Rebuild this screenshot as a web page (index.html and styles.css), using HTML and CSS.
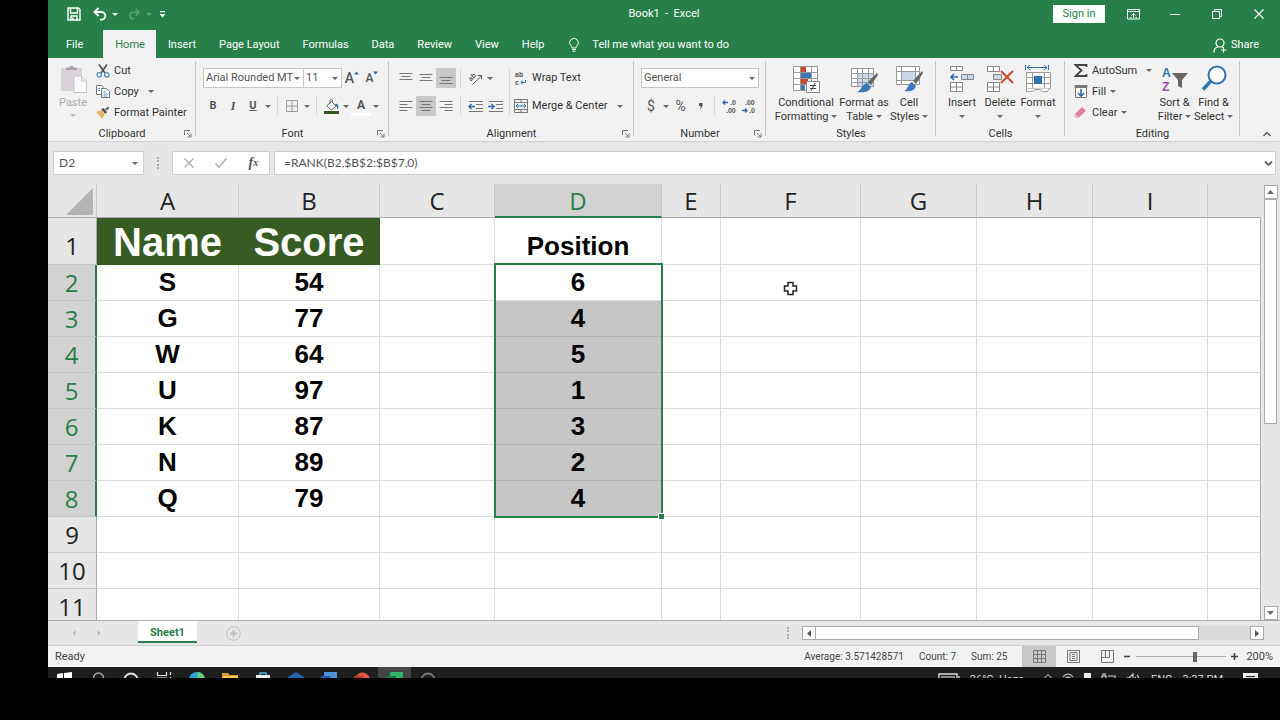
FILE: index.html
```html
<!DOCTYPE html>
<html lang="en">
<head>
<meta charset="utf-8">
<title>Book1 - Excel</title>
<link rel="stylesheet" href="styles.css">
</head>
<body>
<div class="app">
  <header class="titlebar">
    <div class="quick">
      <button class="icon-btn" aria-label="Save"><svg width="14" height="14" viewBox="0 0 14 14" fill="none" stroke="#fff" stroke-width="1.4"><path d="M1 1h10.500l1.500 1.500V13H1zM3.500 1v5h7V1M4 13V9h6v4M6 10.500v2"/></svg></button>
      <button class="icon-btn undo" aria-label="Undo"><svg width="15" height="14" viewBox="0 0 15 14" fill="none" stroke="#fff" stroke-width="1.900"><path d="M5.500 1L1.500 5l4 4M2 5h6.500a3.800 3.800 0 0 1 0 7.600H7"/></svg></button><i class="caret light"></i>
      <button class="icon-btn redo" aria-label="Redo"><svg width="14" height="12" viewBox="0 0 15 14" fill="none" stroke="#fff" stroke-width="1.800"><path d="M9.500 1l4 4-4 4M13 5H6.500a3.800 3.800 0 0 0 0 7.600H8"/></svg></button><i class="caret light faint"></i>
      <button class="icon-btn customize" aria-label="Customize Quick Access Toolbar"><svg width="7" height="7" viewBox="0 0 7 7"><path d="M1 0h5v1.200H1zM0.500 3h6l-3 3.500z" fill="#fff"/></svg></button>
    </div>
    <h1 class="doc-title">Book1&nbsp; -&nbsp; Excel</h1>
    <div class="window-actions">
      <button class="signin">Sign in</button>
      <button class="win-btn" aria-label="Ribbon Display Options"><svg width="13" height="11" viewBox="0 0 13 11" fill="none" stroke="#fff"><path d="M.5.5h12v9.500H.5zM.5 2.500h12M6.500 9V4.500M4.500 6.500l2-2 2 2M3 8.500h1.500M8.500 8.500H10"/></svg></button>
      <button class="win-btn" aria-label="Minimize"><svg width="10" height="10" viewBox="0 0 10 10" stroke="#fff"><path d="M0 5.500h10"/></svg></button>
      <button class="win-btn" aria-label="Restore"><svg width="10" height="10" viewBox="0 0 10 10" fill="none" stroke="#fff"><path d="M.5 2.500h7v7h-7zM2.500 2.500v-2h7v7h-2"/></svg></button>
      <button class="win-btn" aria-label="Close"><svg width="10" height="10" viewBox="0 0 10 10" stroke="#fff" stroke-width="1.100"><path d="M.5.5l9 9M9.500.5l-9 9"/></svg></button>
    </div>
  </header>

  <nav class="tabs">
    <button class="tab file">File</button>
    <button class="tab active">Home</button>
    <button class="tab">Insert</button>
    <button class="tab">Page Layout</button>
    <button class="tab">Formulas</button>
    <button class="tab">Data</button>
    <button class="tab">Review</button>
    <button class="tab">View</button>
    <button class="tab">Help</button>
    <button class="tab tell"><svg width="10" height="14" viewBox="0 0 10 14" fill="none" stroke="#fff"><path d="M3 10V8.500C1.500 7.500.7 6.300.7 4.800a4.300 4.300 0 0 1 8.600 0C9.300 6.300 8.500 7.500 7 8.500V10zM3 11.500h4M3.500 13.200h3"/></svg>Tell me what you want to do</button>
    <button class="tab share"><svg width="15" height="15" viewBox="0 0 15 15" fill="none" stroke="#fff" stroke-width="1.200"><circle cx="7" cy="5" r="4"/><path d="M1 14.500c0-3.500 2-5.500 4.500-5.500M9 8.800l1.500 1M10.500 9.500v5M8 12h5.500"/></svg>Share</button>
  </nav>

  <section class="ribbon">
    <div class="group g-clipboard">
      <div class="body clipboard">
        <button class="big paste" disabled>
          <svg width="27" height="28" viewBox="0 0 27 28"><path d="M1 3h21v23H1z" fill="#dad3da"/><path d="M6 5V2.500h3C9 .5 14 .5 14 2.500h3V5z" fill="#aaa5aa"/><path d="M14 11h7.500l5 5v11.500H14z" fill="#fafafa" stroke="#c5c3c5"/><path d="M21.500 11v5h5" fill="none" stroke="#c5c3c5"/></svg>
          <span>Paste</span><i class="caret faint-dark"></i>
        </button>
        <div class="stack">
          <button class="row"><svg width="14" height="14" viewBox="0 0 14 14" fill="none"><path d="M3 0.500l6 8.500M11 0.500L5 9" stroke="#555" stroke-width="1.700"/><circle cx="3.200" cy="10.800" r="2.200" stroke="#5b8fc4" stroke-width="1.300"/><circle cx="10.800" cy="10.800" r="2.200" stroke="#5b8fc4" stroke-width="1.300"/></svg>Cut</button>
          <button class="row"><svg width="14" height="13" viewBox="0 0 14 13" fill="#fff" stroke="#6f7882"><path d="M.5.5h5l2 2v7h-7z"/><path d="M5.500 3.500h5l3 3v6h-8z"/><path d="M2 3.500h2M2 5.500h2M7.500 7h2M7.500 9h4M7.500 11h4" stroke="#5b8fc4"/></svg>Copy<i class="caret far"></i></button>
          <button class="row"><svg width="14" height="13" viewBox="0 0 14 13"><path d="M0 6l5-2 4 4.500L6 13C4 10 2 8 0 6z" fill="#e8b36a"/><path d="M5 3.500L7.500 2 11 6 9.500 8z" fill="#555"/><path d="M9 3l3-2.500L13.500 2 11 4.500z" fill="#666"/></svg>Format Painter</button>
        </div>
      </div>
      <footer class="label">Clipboard<svg class="launcher" width="8" height="8" viewBox="0 0 8 8" fill="none" stroke="#777"><path d="M.5 5V.5H6M3 3l3.500 3.500M7 3.500V7H3.500"/></svg></footer>
    </div>

    <div class="group g-font">
      <div class="body font">
        <div class="line">
          <span class="select w-font"><select aria-label="Font"><option>Arial Rounded MT Bold</option></select><i class="caret"></i></span>
          <span class="select w-size"><select aria-label="Font size"><option>11</option></select><i class="caret"></i></span>
          <button class="tool grow" aria-label="Increase Font Size">A<svg width="5" height="4" viewBox="0 0 5 4"><path d="M0 3.500L2.500.5 5 3.500z" fill="#2f6cab"/></svg></button>
          <button class="tool grow small" aria-label="Decrease Font Size">A<svg width="5" height="4" viewBox="0 0 5 4"><path d="M0 .5h5L2.500 3.500z" fill="#2f6cab"/></svg></button>
        </div>
        <div class="line">
          <button class="tool bold">B</button><button class="tool italic">I</button><button class="tool underline">U</button><i class="caret slot"></i>
          <i class="sep"></i>
          <button class="tool" aria-label="Borders"><svg width="12" height="12" viewBox="0 0 12 12" fill="none" stroke="#999"><path d="M.5.5h11v11H.5zM6 .5v11M.5 6h11"/></svg></button><i class="caret slot"></i>
          <i class="sep"></i>
          <button class="tool" aria-label="Fill Color"><svg width="15" height="15" viewBox="0 0 15 15"><path d="M2.500 7l5-4.500L12 7l-4.500 4z" fill="#fff" stroke="#666"/><path d="M6 5V1.500c0-1.500 2.500-1.500 2.500 0V4" fill="none" stroke="#666"/><path d="M12 4.500c3 1 3 4 1.500 6C13 9 13 7 11 6z" fill="#3a73b0"/><path d="M0 12h15v3H0z" fill="#375623"/></svg></button><i class="caret slot"></i>
          <button class="tool fontcolor" aria-label="Font Color">A</button><i class="caret slot"></i>
        </div>
      </div>
      <footer class="label">Font<svg class="launcher" width="8" height="8" viewBox="0 0 8 8" fill="none" stroke="#777"><path d="M.5 5V.5H6M3 3l3.500 3.500M7 3.500V7H3.500"/></svg></footer>
    </div>

    <div class="group g-align">
      <div class="body align">
        <div class="lines">
          <div class="line">
            <button class="tool" aria-label="Top Align"><svg width="14" height="14" viewBox="0 0 14 14" stroke="#777"><path d="M.5 2.500h13M2.500 5.500h9M.5 8.500h13"/></svg></button>
            <button class="tool" aria-label="Middle Align"><svg width="14" height="14" viewBox="0 0 14 14" stroke="#777"><path d="M.5 3.500h13M2.500 6.500h9M.5 9.500h13"/></svg></button>
            <button class="tool on" aria-label="Bottom Align"><svg width="14" height="14" viewBox="0 0 14 14" stroke="#777"><path d="M.5 6.500h13M2.500 9.500h9M.5 12.500h13"/></svg></button>
            <i class="sep"></i>
            <button class="tool" aria-label="Orientation"><svg width="16" height="16" viewBox="0 0 16 16" fill="none" stroke="#555"><text x="2" y="9" transform="rotate(-42 6 8)" class="tiny slant" stroke="none">ab</text><path d="M5.500 14.500L14.500 6M11 5.500h3.500V9"/></svg></button><i class="caret slot"></i>
          </div>
          <div class="line">
            <button class="tool" aria-label="Align Left"><svg width="14" height="12" viewBox="0 0 14 12" stroke="#777"><path d="M.5 1.500h13M.5 4.500h8M.5 7.500h13M.5 10.500h8"/></svg></button>
            <button class="tool on" aria-label="Center"><svg width="14" height="12" viewBox="0 0 14 12" stroke="#777"><path d="M.5 1.500h13M2.500 4.500h9M.5 7.500h13M2.500 10.500h9"/></svg></button>
            <button class="tool" aria-label="Align Right"><svg width="14" height="12" viewBox="0 0 14 12" stroke="#777"><path d="M.5 1.500h13M5.500 4.500h8M.5 7.500h13M5.500 10.500h8"/></svg></button>
            <i class="sep"></i>
            <button class="tool" aria-label="Decrease Indent"><svg width="15" height="13" viewBox="0 0 15 13" fill="none" stroke="#777"><path d="M1 1.500h14M8 4.500h7M8 8.500h7M1 11.500h14"/><path d="M7 6.500H1M3.500 4L1 6.500 3.500 9" stroke="#2f6cab" stroke-width="1.500"/></svg></button>
            <button class="tool" aria-label="Increase Indent"><svg width="15" height="13" viewBox="0 0 15 13" fill="none" stroke="#777"><path d="M1 1.500h14M8 4.500h7M8 8.500h7M1 11.500h14"/><path d="M0 6.500h6M3.500 4L6 6.500 3.500 9" stroke="#2f6cab" stroke-width="1.500"/></svg></button>
          </div>
        </div>
        <i class="sep tall"></i>
        <div class="lines">
          <button class="row wide"><svg width="14" height="16" viewBox="0 0 14 16"><text x="1" y="7" class="tiny">ab</text><text x="1" y="15" class="tiny">c</text><path d="M11.500 10v2.500H7M9 10.500l-2 2 2 2" fill="none" stroke="#2f6cab"/></svg>Wrap Text</button>
          <button class="row wide"><svg width="14" height="14" viewBox="0 0 14 14" fill="none" stroke="#777"><path d="M.5.5h13v13H.5zM.5 3.500h13M.5 10.500h13M7 .5v3M7 10.500v3"/><path d="M2 7h10M4 5L2 7l2 2M10 5l2 2-2 2" stroke="#2f6cab"/></svg>Merge &amp; Center<i class="caret far"></i></button>
        </div>
      </div>
      <footer class="label">Alignment<svg class="launcher" width="8" height="8" viewBox="0 0 8 8" fill="none" stroke="#777"><path d="M.5 5V.5H6M3 3l3.500 3.500M7 3.500V7H3.500"/></svg></footer>
    </div>

    <div class="group g-number">
      <div class="body number">
        <div class="line"><span class="select w-number"><select aria-label="Number format"><option>General</option></select><i class="caret"></i></span></div>
        <div class="line">
          <button class="tool sign">$</button><i class="caret slot"></i><button class="tool sign">%</button><button class="tool bold" aria-label="Comma Style"><svg width="5" height="8" viewBox="0 0 5 8"><path d="M1 1h3.500c.5 3-.5 5-3 6 1-1 1.200-2 1.200-3H1z" fill="#555"/></svg></button>
          <i class="sep"></i>
          <button class="tool" aria-label="Increase Decimal"><svg width="15" height="16" viewBox="0 0 15 16"><text x="8" y="7" class="digits">.0</text><text x="4" y="15" class="digits">.00</text><path d="M6 4.500H1M3 2.500l-2 2 2 2" fill="none" stroke="#2f6cab" stroke-width="1.300"/></svg></button>
          <button class="tool" aria-label="Decrease Decimal"><svg width="15" height="16" viewBox="0 0 15 16"><text x="3" y="7" class="digits">.00</text><text x="7" y="15" class="digits">.0</text><path d="M0 12.500h5M3 10.500l2 2-2 2" fill="none" stroke="#2f6cab" stroke-width="1.300"/></svg></button>
        </div>
      </div>
      <footer class="label">Number<svg class="launcher" width="8" height="8" viewBox="0 0 8 8" fill="none" stroke="#777"><path d="M.5 5V.5H6M3 3l3.500 3.500M7 3.500V7H3.500"/></svg></footer>
    </div>

    <div class="group g-styles">
      <div class="body bigs">
        <button class="big w-cond"><svg width="28" height="28" viewBox="0 0 28 28"><path d="M1.500 1.500h24v24h-24z" fill="#fff" stroke="#999"/><path d="M1.500 7.500h24M1.500 13.500h24M1.500 19.500h24M8.500 1.500v24M19.500 1.500v24" stroke="#999"/><path d="M9 2h5v5H9zM9 14h7v5H9z" fill="#d24726"/><path d="M9 8h10v5H9zM9 20h4v5H9z" fill="#3a78b5"/><path d="M14.500 16.500h13v11h-13z" fill="#fff" stroke="#888"/><path d="M18 20.500h6M18 23.500h6M23 18l-4 8" stroke="#444"/></svg><span>Conditional<br>Formatting <i class="caret"></i></span></button>
        <button class="big w-table"><svg width="28" height="28" viewBox="0 0 28 28"><path d="M1.500 3.500h22v18h-22z" fill="#fff" stroke="#999"/><path d="M7 8h16v13H7z" fill="#c9d9ea"/><path d="M1.500 8.500h22M1.500 13.500h22M1.500 17.500h22M7.500 3.500v18M12.500 3.500v18M18.500 3.500v18" stroke="#999"/><path d="M27 8l1 2-7 10-3-3z" fill="#666"/><path d="M17 18l4 4c-2 5-7 6-14 5 4-1 5-8 10-9z" fill="#3a78b5"/></svg><span>Format as<br>Table <i class="caret"></i></span></button>
        <button class="big w-cell"><svg width="28" height="28" viewBox="0 0 28 28"><path d="M1.500 1.500h23v18h-23z" fill="#fff" stroke="#999"/><path d="M1.500 6.500h23M1.500 15.500h23M6.500 1.500v18M20.500 1.500v18" stroke="#999"/><path d="M7 7h13v8H7z" fill="#c9d9ea"/><path d="M27 6l1 2-7 11-3-3z" fill="#666"/><path d="M17 17l4 4c-2 5-6 6-12 5 4-1 4-8 8-9z" fill="#3a78b5"/></svg><span>Cell<br>Styles <i class="caret"></i></span></button>
      </div>
      <footer class="label">Styles</footer>
    </div>

    <div class="group g-cells">
      <div class="body bigs">
        <button class="big w-small"><svg width="26" height="28" viewBox="0 0 26 28" fill="#fff" stroke="#888"><path d="M1.500 1.500h12v4h-12zM7.500 1.500v4"/><path d="M12.500 9.500h12v5h-12z" fill="#c9d9ea"/><path d="M18.500 9.500v5"/><path d="M1.500 17.500h12v9h-12zM7.500 17.500v9M1.500 22h12"/><path d="M9 12H2M5 9l-3 3 3 3" fill="none" stroke="#2f6cab" stroke-width="1.600"/></svg><span>Insert<br><i class="caret"></i></span></button>
        <button class="big w-small"><svg width="28" height="28" viewBox="0 0 28 28" fill="#fff" stroke="#888"><path d="M1.500 1.500h12v5h-12zM7.500 1.500v5"/><path d="M7.500 9.500h8v5h-8z" fill="#c9d9ea"/><path d="M1.500 17.500h12v9h-12zM7.500 17.500v9M1.500 22h12"/><path d="M15 6l12 12M27 6L15 18" stroke="#d24726" stroke-width="2"/></svg><span>Delete<br><i class="caret"></i></span></button>
        <button class="big w-small"><svg width="28" height="28" viewBox="0 0 28 28" fill="#fff" stroke="#999"><path d="M2.500 7.500h24v16h-24zM2.500 12.500h24M2.500 18.500h24M8.500 7.500v16M20.500 7.500v16"/><path d="M10 11h8v8h-8z" fill="#2f74b5" stroke="none"/><path d="M2.500 23.500v3h6l3-2h4l3 2h5l2-3"/><path d="M3 2.500h20M6 0L3 2.500 6 5M20 0l3 2.500L20 5M1.500 0v5M24.500 0v5" fill="none" stroke="#2f6cab"/></svg><span>Format<br><i class="caret"></i></span></button>
      </div>
      <footer class="label">Cells</footer>
    </div>

    <div class="group g-editing">
      <div class="body editing">
        <div class="stack">
          <button class="row"><svg width="14" height="13" viewBox="0 0 14 13" fill="none" stroke="#444" stroke-width="1.800"><path d="M12.500 3V1H1.500l6 5.500-6 5.500h11v-2"/></svg>AutoSum<i class="caret far"></i></button>
          <button class="row"><svg width="14" height="13" viewBox="0 0 14 13" fill="#fff" stroke="#777"><path d="M1.500.5h11v12h-11z"/><path d="M1 .5h12v2H1z" fill="#777"/><path d="M7 4v7M4 8l3 3 3-3" fill="none" stroke="#2f6cab" stroke-width="1.600"/></svg>Fill<i class="caret"></i></button>
          <button class="row"><svg width="14" height="13" viewBox="0 0 14 13"><path d="M1 8l7-7 4 3.500-7 7z" fill="#e0819d"/><path d="M1 8l4 3.500-2 1L0 10z" fill="#f0b6c6"/></svg>Clear<i class="caret"></i></button>
        </div>
        <button class="big w-sort"><svg width="28" height="28" viewBox="0 0 28 28"><text x="1" y="12" class="az a">A</text><text x="1" y="26" class="az z">Z</text><path d="M11 8h16l-6 7v8l-4-2v-6z" fill="#666"/></svg><span>Sort &amp;<br>Filter <i class="caret"></i></span></button>
        <button class="big w-sort"><svg width="28" height="28" viewBox="0 0 28 28" fill="none" stroke="#2f74b5"><circle cx="17" cy="10" r="8.500" fill="#fff" stroke-width="2"/><path d="M11 16L3 24.500" stroke-width="3.500"/></svg><span>Find &amp;<br>Select <i class="caret"></i></span></button>
      </div>
      <footer class="label">Editing</footer>
    </div>
    <button class="collapse" aria-label="Collapse the Ribbon"><svg width="8" height="6" viewBox="0 0 8 6" fill="none" stroke="#555" stroke-width="1.400"><path d="M.5 5L4 1.500 7.500 5"/></svg></button>
  </section>

  <section class="formula-bar">
    <div class="name-box"><input type="text" aria-label="Name Box" value="D2"><i class="caret"></i></div>
    <i class="dots"></i>
    <div class="formula-tools">
      <button class="icon-btn" aria-label="Cancel"><svg width="10" height="10" viewBox="0 0 10 10" stroke="#b5b5b5" stroke-width="1.500"><path d="M.5.5l9 9M9.500.5l-9 9"/></svg></button>
      <button class="icon-btn" aria-label="Enter"><svg width="12" height="10" viewBox="0 0 12 10" fill="none" stroke="#b5b5b5" stroke-width="1.700"><path d="M.5 5.500L4 9l7.500-8.500"/></svg></button>
      <button class="icon-btn fx" aria-label="Insert Function">f<sub>x</sub></button>
    </div>
    <div class="formula"><input type="text" aria-label="Formula" value="=RANK(B2,$B$2:$B$7,0)"><svg width="9" height="7" viewBox="0 0 9 7" fill="none" stroke="#666" stroke-width="1.800"><path d="M1 1.500l3.500 3.500L8 1.500"/></svg></div>
  </section>

  <main class="sheet">
    <div class="grid-wrap">
      <table class="grid">
        <colgroup><col class="c-row"><col class="c-a"><col class="c-b"><col class="c-c"><col class="c-d"><col class="c-e"><col class="c-f"><col class="c-g"><col class="c-g"><col class="c-c"><col></colgroup>
        <thead><tr><th class="corner"><svg width="28" height="27" viewBox="0 0 28 27"><path d="M27 0v27H0z" fill="#b4b4b4"/></svg></th><th>A</th><th>B</th><th>C</th><th class="picked">D</th><th>E</th><th>F</th><th>G</th><th>H</th><th>I</th><th></th></tr></thead>
        <tbody>
          <tr class="first"><th>1</th><td class="head">Name</td><td class="head">Score</td><td></td><td>Position</td><td></td><td></td><td></td><td></td><td></td><td></td></tr>
          <tr class="picked"><th>2</th><td>S</td><td>54</td><td></td><td class="anchor">6<div class="selection"></div></td><td></td><td class="anchor"><svg class="pointer" width="15" height="15" viewBox="0 0 15 15"><path d="M5 1.500h5V5h3.500v5H10v3.500H5V10H1.500V5H5z" fill="#fff" stroke="#222" stroke-width="1.500"/></svg></td><td></td><td></td><td></td><td></td></tr>
          <tr class="picked"><th>3</th><td>G</td><td>77</td><td></td><td class="sel">4</td><td></td><td></td><td></td><td></td><td></td><td></td></tr>
          <tr class="picked"><th>4</th><td>W</td><td>64</td><td></td><td class="sel">5</td><td></td><td></td><td></td><td></td><td></td><td></td></tr>
          <tr class="picked"><th>5</th><td>U</td><td>97</td><td></td><td class="sel">1</td><td></td><td></td><td></td><td></td><td></td><td></td></tr>
          <tr class="picked"><th>6</th><td>K</td><td>87</td><td></td><td class="sel">3</td><td></td><td></td><td></td><td></td><td></td><td></td></tr>
          <tr class="picked"><th>7</th><td>N</td><td>89</td><td></td><td class="sel">2</td><td></td><td></td><td></td><td></td><td></td><td></td></tr>
          <tr class="picked"><th>8</th><td>Q</td><td>79</td><td></td><td class="sel">4</td><td></td><td></td><td></td><td></td><td></td><td></td></tr>
          <tr><th>9</th><td></td><td></td><td></td><td></td><td></td><td></td><td></td><td></td><td></td><td></td></tr>
          <tr><th>10</th><td></td><td></td><td></td><td></td><td></td><td></td><td></td><td></td><td></td><td></td></tr>
          <tr><th>11</th><td></td><td></td><td></td><td></td><td></td><td></td><td></td><td></td><td></td><td></td></tr>
        </tbody>
      </table>
    </div>
    <div class="vscroll">
      <button class="arrow" aria-label="Scroll up"><svg width="7" height="4" viewBox="0 0 7 4"><path d="M0 4L3.500 0 7 4z" fill="#666"/></svg></button>
      <div class="thumb"></div>
      <button class="arrow" aria-label="Scroll down"><svg width="7" height="4" viewBox="0 0 7 4"><path d="M0 0h7L3.500 4z" fill="#666"/></svg></button>
    </div>
  </main>

  <section class="sheetbar">
    <div class="sheet-nav">
      <button class="icon-btn" aria-label="Previous sheet"><svg width="4" height="6" viewBox="0 0 4 6"><path d="M3.500 0v6L.5 3z" fill="#bbb"/></svg></button>
      <button class="icon-btn" aria-label="Next sheet"><svg width="4" height="6" viewBox="0 0 4 6"><path d="M.5 0v6l3-3z" fill="#bbb"/></svg></button>
    </div>
    <button class="sheet-tab">Sheet1</button>
    <button class="icon-btn add" aria-label="New sheet"><svg width="15" height="15" viewBox="0 0 15 15" fill="none" stroke="#bdbdbd"><circle cx="7.500" cy="7.500" r="6.800"/><path d="M7.500 4v7M4 7.500h7" stroke-width="1.800"/></svg></button>
    <i class="dots"></i>
    <div class="hscroll">
      <button class="arrow" aria-label="Scroll left"><svg width="4" height="7" viewBox="0 0 4 7"><path d="M4 0v7L0 3.500z" fill="#555"/></svg></button>
      <div class="thumb"></div>
      <button class="arrow" aria-label="Scroll right"><svg width="4" height="7" viewBox="0 0 4 7"><path d="M0 0v7l4-3.500z" fill="#555"/></svg></button>
    </div>
  </section>

  <footer class="status">
    <span class="ready">Ready</span>
    <span>Average: 3.571428571</span><span>Count: 7</span><span>Sum: 25</span>
    <div class="views">
      <button class="view on" aria-label="Normal"><svg width="13" height="13" viewBox="0 0 13 13" fill="none" stroke="#777"><path d="M.5.5h12v12H.5zM.5 4.500h12M.5 8.500h12M4.500.5v12M8.500.5v12"/></svg></button>
      <button class="view" aria-label="Page Layout"><svg width="13" height="13" viewBox="0 0 13 13" fill="none" stroke="#777"><path d="M.5.5h12v12H.5zM3 2.500h7v8H3zM5 4.500h3M5 6.500h3M5 8.500h3"/></svg></button>
      <button class="view" aria-label="Page Break Preview"><svg width="13" height="13" viewBox="0 0 13 13" fill="none" stroke="#777"><path d="M.5.5h12v12H.5zM.5 7.500h8v-7M4.500.5v7"/></svg></button>
    </div>
    <div class="zoom">
      <button class="icon-btn" aria-label="Zoom out"><svg width="7" height="7" viewBox="0 0 7 7" stroke="#444" stroke-width="1.600"><path d="M0 3.500h6"/></svg></button>
      <input type="range" aria-label="Zoom" min="0" max="100" value="66">
      <button class="icon-btn" aria-label="Zoom in"><svg width="7" height="7" viewBox="0 0 7 7" stroke="#444" stroke-width="1.600"><path d="M0 3.500h7M3.500 0v7"/></svg></button>
      <span class="percent">200%</span>
    </div>
  </footer>

  <div class="taskbar">
    <div class="task-apps">
      <button class="task" aria-label="Start"><svg width="16" height="16" viewBox="0 0 16 16" fill="#fff"><path d="M0 2l6-1v7H0zM7 1l8-1v8H7zM0 9h6v6l-6-1zM7 9h8v7l-8-1z"/></svg></button>
      <button class="task" aria-label="Search"><svg width="16" height="16" viewBox="0 0 16 16" fill="none" stroke="#aaa" stroke-width="1.400"><circle cx="8.500" cy="6" r="5"/><path d="M5 10l-4 5"/></svg></button>
      <button class="task" aria-label="Cortana"><svg width="16" height="16" viewBox="0 0 16 16" fill="none" stroke="#ddd" stroke-width="2"><circle cx="8" cy="8" r="6.500"/></svg></button>
      <button class="task" aria-label="Task View"><svg width="16" height="16" viewBox="0 0 16 16" fill="none" stroke="#ddd" stroke-width="1.200"><path d="M1.500 0v3.500h9V0M1.500 6h9v5h-9zM14.500 0v3M14.500 5v10"/></svg></button>
      <button class="task" aria-label="Edge"><svg width="16" height="16" viewBox="0 0 16 16"><circle cx="8" cy="8" r="8" fill="#2da4d8"/><path d="M9 0a8 8 0 0 1 7 8H8z" fill="#5bd67a"/></svg></button>
      <button class="task" aria-label="File Explorer"><svg width="16" height="16" viewBox="0 0 16 16"><path d="M0 1h6l2 2h8v11H0z" fill="#d99c22"/><path d="M1 4h15v10H1z" fill="#f3cd62"/></svg></button>
      <button class="task" aria-label="Store"><svg width="16" height="16" viewBox="0 0 16 16"><path d="M5 3V1h6v2" fill="none" stroke="#4fb2d4" stroke-width="1.500"/><path d="M1 3h14v12H1z" fill="#eee"/></svg></button>
      <button class="task" aria-label="Mail"><svg width="16" height="16" viewBox="0 0 16 16"><path d="M0 5l8-5 8 5v10H0z" fill="#1f62ae"/></svg></button>
      <button class="task" aria-label="Word"><svg width="16" height="16" viewBox="0 0 16 16"><path d="M3 0h13v16H3z" fill="#4990dd"/><path d="M0 4h9v9H0z" fill="#245ab0"/></svg></button>
      <button class="task" aria-label="PowerPoint"><svg width="16" height="16" viewBox="0 0 16 16"><circle cx="8.500" cy="8" r="7.500" fill="#dd5741"/><path d="M0 4h9v9H0z" fill="#b5361f"/></svg></button>
      <button class="task current" aria-label="Excel"><svg width="16" height="16" viewBox="0 0 16 16"><path d="M3 0h13v16H3z" fill="#34b46b"/><path d="M0 4h9v9H0z" fill="#187a43"/></svg></button>
      <button class="task" aria-label="Recorder"><svg width="16" height="16" viewBox="0 0 16 16" fill="none" stroke="#777" stroke-width="1.800"><circle cx="8" cy="8" r="6.500"/></svg></button>
    </div>
    <div class="tray">
      <svg width="22" height="13" viewBox="0 0 22 13" fill="none" stroke="#ddd" stroke-width="1.400"><path d="M1 1h18v10H1zM21 3v6"/><path d="M3 3h14v6H3z" fill="#888" stroke="none"/></svg>
      <span class="weather">26°C&nbsp; Haze</span>
      <svg width="8" height="6" viewBox="0 0 8 6" fill="none" stroke="#ddd"><path d="M.5 5L4 1.500 7.500 5"/></svg>
      <svg width="12" height="13" viewBox="0 0 12 13" fill="none" stroke="#ccc" stroke-width="1.200"><path d="M1 4c3-4 7-4 10 0M3 6c2-2.500 4-2.500 6 0M5 8h2"/></svg>
      <svg width="7" height="13" viewBox="0 0 7 13"><path d="M0 0h7v13H0z" fill="#eee"/></svg>
      <svg width="15" height="11" viewBox="0 0 15 11" fill="none" stroke="#ccc" stroke-width="1.200"><path d="M2 0v3M4 0v3M1 3h4v5H1zM7 3h7v6H5"/></svg>
      <svg width="15" height="13" viewBox="0 0 15 13" fill="none" stroke="#ccc" stroke-width="1.200"><path d="M1 5h2l4-4v11L3 8H1zM9 4q2 2 0 5M11 2q4 4 0 9"/></svg>
      <span>ENG</span>
      <span>3:37 PM</span>
      <svg class="notify" width="15" height="13" viewBox="0 0 15 13"><path d="M0 0h15v11H8l-3 2v-2H0z" fill="#eee"/><path d="M3 3.500h9M3 6.500h9" stroke="#222"/></svg>
    </div>
  </div>
</div>
</body>
</html>
```
FILE: styles.css
```css
* { box-sizing: border-box; }

body {
  margin: 0;
  height: 100vh;
  padding: 0 0 42px 48px;
  background: #000;
  color: #333;
  font: 11px/14px Roboto, "Open Sans", sans-serif;
}

button, input, select { font: inherit; color: inherit; margin: 0; }
button { border: 0; padding: 0; background: none; white-space: nowrap; }
svg { display: block; flex: none; }

.app { display: flex; flex-direction: column; height: 100%; background: #e6e6e6; overflow: hidden; }
.icon-btn { display: flex; align-items: center; justify-content: center; }

.caret {
  display: inline-block;
  flex: none;
  border: 3px solid transparent;
  border-top-color: #666;
  border-bottom: 0;
  vertical-align: middle;
}
.caret.light { border-top-color: #fff; }
.caret.faint { opacity: .25; }
.caret.faint-dark { border-top-color: #bbb; }
.caret.slot { margin: 0 2px; }

/* Title bar and tabs */
.titlebar {
  display: grid;
  grid-template-columns: 1fr auto 1fr;
  align-items: center;
  flex: none;
  height: 30px;
  padding-bottom: 2px;
  background: #27804a;
  color: #fff;
}
.quick { display: flex; align-items: center; padding-left: 19px; }
.undo { margin: 0 4px 0 12px; }
.redo { margin: 0 5px 0 9px; opacity: .25; }
.customize { margin-left: 7px; }
.doc-title { margin: 0; font-size: 11px; font-weight: 400; }
.window-actions { display: flex; align-items: center; justify-content: flex-end; }
.signin { width: 52px; height: 18px; margin-right: 7px; background: #fff; color: #27804a; }
.win-btn { display: flex; justify-content: center; width: 42px; }

.tabs { display: flex; flex: none; height: 28px; background: #27804a; color: #fff; }
.tab { padding: 2px 11px 0 12px; }
.tab.file { margin: 0 9px 0 6px; }
.tab.active { background: #f2f2f2; color: #27804a; }
.tab.tell { display: flex; align-items: center; gap: 13px; padding-left: 14px; }
.tab.share { display: flex; align-items: center; gap: 3px; margin-left: auto; padding-right: 21px; }

/* Ribbon */
.ribbon { display: flex; flex: none; height: 84px; background: #f2f2f2; border-bottom: 1px solid #d2d2d2; }
.group { position: relative; display: flex; flex-direction: column; flex: none; padding: 2px 7px 0; }
.group::after { content: ""; position: absolute; top: 3px; right: 0; bottom: 5px; width: 1px; background: #c6c6c6; }
.g-clipboard { width: 148px; }
.g-font { width: 193px; }
.g-align { width: 245px; }
.g-number { width: 132px; }
.g-styles { width: 170px; }
.g-cells { width: 129px; }
.g-editing { width: 175px; }
.body { display: flex; height: 66px; }
.label { position: relative; padding-top: 1px; text-align: center; }
.launcher { position: absolute; right: -3px; top: 4px; }

.big { display: flex; flex-direction: column; align-items: center; flex: none; padding-top: 5px; line-height: 14px; }
.big svg { margin-bottom: 3px; }
.big .caret { vertical-align: 2px; }
.paste { width: 36px; color: #aaa; }
.paste .caret { margin-top: 4px; }
.w-cond { width: 66px; }
.w-table { width: 50px; }
.w-cell { width: 40px; }
.w-small { width: 38px; }
.w-sort { width: 39px; }

.stack { display: flex; flex-direction: column; }
.row { display: flex; align-items: center; gap: 4px; height: 21px; }
.row.wide { height: 20px; }
.far { margin-left: 5px; }
.clipboard { gap: 5px; }

.font, .number, .lines { display: flex; flex-direction: column; gap: 8px; }
.font, .number, .align { padding-top: 8px; }
.line { display: flex; align-items: center; height: 20px; }
.sep { width: 1px; height: 20px; margin: 0 4px; background: #d8d8d8; }
.sep.tall { height: 48px; }
.tool { display: flex; align-items: center; justify-content: center; width: 20px; height: 20px; color: #555; }
.tool.on { background: #c8c8c8; }
.bold { font-weight: 700; }
.italic { font: italic 700 12px "Liberation Serif", serif; }
.underline { font-weight: 700; text-decoration: underline; }
.grow { align-items: flex-start; font-size: 14px; line-height: 20px; font-weight: 500; }
.grow svg { margin-top: 3px; }
.grow.small { font-size: 12px; }
.fontcolor { font-size: 12px; font-weight: 700; border-bottom: 3px solid #fff; }
.sign { font-size: 14px; }
.tiny { font: 700 7px "Liberation Sans", sans-serif; fill: #555; }
.digits { font: 700 7px "Liberation Sans", sans-serif; fill: #555; }
.az { font: 700 12px "Liberation Sans", sans-serif; }
.az.a { fill: #2f74b5; }
.az.z { fill: #9a4bb5; }

.select { position: relative; display: block; height: 20px; border: 1px solid #c6c6c6; background: #fff; overflow: hidden; }
.select select { display: block; width: 100%; height: 18px; padding: 0 9px 0 2px; border: 0; background: none; appearance: none; color: #555; text-overflow: clip; }
.select .caret { position: absolute; right: 3px; top: 8px; }
.w-font { width: 101px; }
.w-size { width: 39px; margin-left: -1px; }
.w-number { width: 118px; }
.editing { padding-left: 2px; }
.editing .stack { width: 81px; }
.collapse { align-self: flex-end; margin: 0 9px 4px auto; }

/* Formula bar */
.formula-bar { display: flex; flex: none; height: 42px; padding: 9px 4px 9px 5px; }
.name-box, .formula-tools, .formula { display: flex; align-items: center; border: 1px solid #cfcfcf; background: #fff; color: #555; }
.name-box { width: 91px; padding: 0 5px; }
.name-box input, .formula input { flex: 1; min-width: 0; padding: 0; border: 0; background: none; font-family: Lato, "Open Sans", sans-serif; font-size: 12px; }
.dots { width: 1px; height: 12px; margin: 6px 13px; border-left: 2px dotted #aaa; }
.formula-tools { justify-content: space-around; width: 98px; margin-right: 4px; }
.fx { font: italic 700 14px "Liberation Serif", serif; }
.fx sub { font-size: 10px; line-height: 1; }
.formula { flex: 1; padding: 0 2px 0 9px; }

/* Grid */
.sheet { display: flex; flex: 1; min-height: 0; border-bottom: 1px solid #ababab; }
.grid-wrap { flex: 1; min-width: 0; overflow: hidden; }
.grid { width: 100%; table-layout: fixed; border-collapse: separate; border-spacing: 0; }
.c-row { width: 49px; }
.c-a { width: 142px; }
.c-b { width: 141px; }
.c-c { width: 115px; }
.c-d { width: 167px; }
.c-e { width: 59px; }
.c-f { width: 140px; }
.c-g { width: 116px; }
.grid th, .grid td { height: 36px; padding: 0 0 2px; text-align: center; border-right: 1px solid #dcdcdc; border-bottom: 1px solid #dcdcdc; }
.grid td { background: #fff; color: #000; font: 700 26px/30px "Liberation Sans", Arial, sans-serif; }
.grid th { background: #e6e6e6; color: #222; font: 400 24px/30px "Open Sans", sans-serif; }
.grid thead th { height: 34px; padding: 0; border-right-color: #c6c6c6; border-bottom-color: #ababab; }
.grid thead th:last-child { border-right-color: #e6e6e6; }
.grid tbody th { padding: 0; border-right-color: #ababab; border-bottom-color: #c6c6c6; }
.grid .corner svg { margin: 2px 2px 0 auto; }
.grid thead th.picked { padding-top: 1px; background: #d2d2d2; color: #27804a; border-bottom: 2px solid #27804a; }
.grid .picked th { background: #d2d2d2; color: #27804a; border-right: 2px solid #27804a; }
.grid td:last-child { border-right-color: #ababab; }
.grid .first th, .grid .first td { height: 47px; padding-bottom: 3px; vertical-align: bottom; }
.grid .first td.head { padding: 0; background: #375c23; border-color: #375c23; color: #fff; font-size: 40px; line-height: 44px; }
.grid td.sel { background: #c6c6c6; border-bottom-color: #b4b4b4; }
.anchor { position: relative; }
.selection { position: absolute; top: -2px; left: -1px; right: -2px; height: 255px; border: 2px solid #27804a; }
.selection::after { content: ""; position: absolute; right: -3px; bottom: -3px; width: 5px; height: 5px; background: #27804a; outline: 1px solid #fff; }
.pointer { position: absolute; left: 62px; top: 16px; }

.arrow { display: flex; align-items: center; justify-content: center; flex: none; width: 14px; height: 14px; border: 1px solid #ababab; background: #fff; }
.thumb { background: #fff; border: 1px solid #ababab; }
.vscroll { display: flex; flex-direction: column; align-items: center; flex: none; width: 19px; padding-top: 1px; }
.vscroll .thumb { width: 13px; height: 225px; margin-bottom: auto; }

/* Sheet tabs */
.sheetbar { display: flex; align-items: center; flex: none; height: 25px; padding-right: 16px; border-bottom: 1px solid #cfcfcf; }
.sheet-nav { display: flex; gap: 21px; width: 90px; padding-left: 24px; }
.sheet-tab { align-self: flex-start; width: 59px; height: 22px; padding-top: 3px; background: #fff; border-bottom: 2px solid #27804a; color: #27804a; font-weight: 700; }
.add { margin: 0 auto 0 29px; }
.hscroll { display: flex; width: 39%; max-width: 462px; background: #dadada; }
.hscroll .thumb { width: 384px; margin: 0 auto 0 -1px; }

/* Status bar */
.status { display: flex; align-items: center; flex: none; height: 21px; gap: 15px; padding: 0 7px; background: #f2f2f2; color: #444; font-size: 10px; }
.ready { margin-right: auto; font-size: 11px; }
.views { display: flex; align-self: stretch; }
.view { display: flex; align-items: center; justify-content: center; width: 34px; }
.view.on { background: #c8c8c8; }
.zoom { display: flex; align-items: center; gap: 5px; margin-left: -15px; }
.zoom input { appearance: none; width: 90px; height: 12px; background: linear-gradient(#aaa, #aaa) center / 100% 1px no-repeat; }
.zoom input::-webkit-slider-thumb { appearance: none; width: 4px; height: 10px; background: #666; }
.percent { margin-left: 3px; font-size: 11px; }

/* Taskbar */
.taskbar { display: flex; justify-content: space-between; flex: none; height: 11px; background: #1f1f1f; color: #ddd; overflow: hidden; }
.task-apps { display: flex; }
.task { display: flex; justify-content: center; align-items: flex-start; width: 33px; height: 30px; padding-top: 5px; }
.task.current { background: #454545; }
.tray { display: flex; align-items: flex-start; gap: 10px; padding: 6px 22px 0 0; }
.weather { margin-right: 10px; }
.notify { margin-left: 10px; }
```
